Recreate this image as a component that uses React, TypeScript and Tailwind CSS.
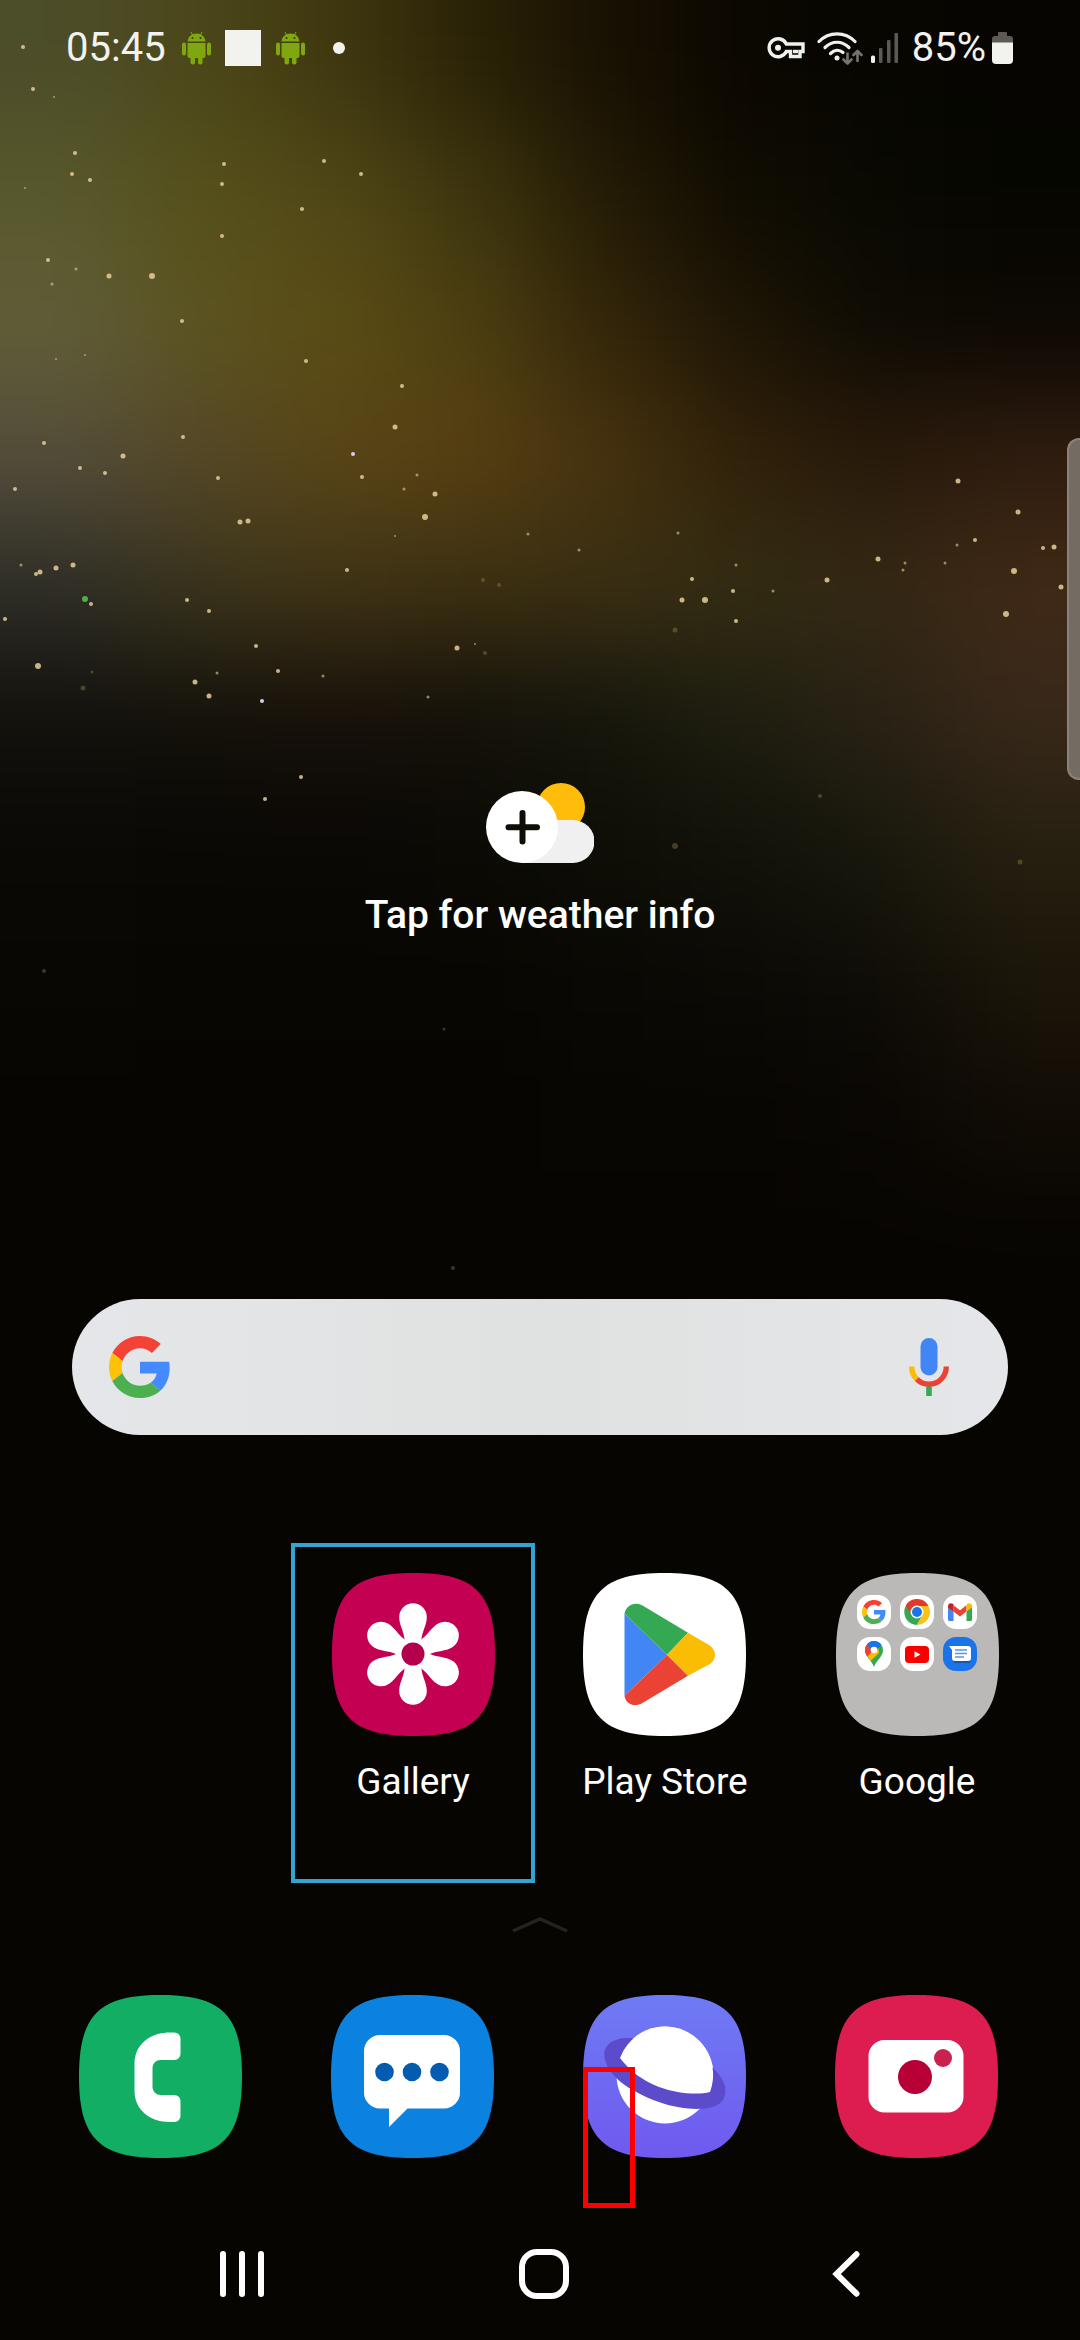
import type { ReactNode } from "react";

/* Colour field of the wallpaper: one row for every 130 units of height. */
const FIELD = [
  ["#4c4d29", "#4b4719", "#3f370f", "#2a2206", "#181002", "#0b0701", "#070601", "#060501"],
  ["#58582c", "#56501a", "#504717", "#3d350e", "#231b05", "#100c02", "#090902", "#060601"],
  ["#605d38", "#5b5320", "#5a4c15", "#4c3f11", "#332509", "#1d1505", "#0e0b04", "#0d0803"],
  ["#544d3a", "#554726", "#594516", "#573f12", "#46320f", "#302009", "#28190a", "#2e1c0f"],
  ["#2f2e27", "#3a341c", "#403416", "#3c3012", "#3a2f13", "#332d13", "#342814", "#402916"],
  ["#12110c", "#14110a", "#17100a", "#14110a", "#16160c", "#1f1e10", "#292215", "#38281a"],
  ["#0a0906", "#0a0805", "#0a0805", "#0b0a04", "#0e0e06", "#12120a", "#19180d", "#262010"],
  ["#080704", "#080603", "#080603", "#080603", "#090804", "#0b0a05", "#0f0d07", "#1c160a"],
  ["#070502", "#070502", "#070502", "#070502", "#070603", "#080603", "#0a0704", "#120c05"],
];

/* Stars as x, y, radius. */
const STARS: [number, number, number][] = [
  [23, 47, 2], [33, 89, 2], [54, 97, 1], [75, 153, 2], [72, 174, 2], [90, 180, 2], [25, 188, 1],
  [224, 164, 2], [222, 184, 2], [222, 236, 2], [324, 161, 2], [361, 174, 2], [302, 209, 2],
  [48, 260, 2], [76, 269, 1.5], [109, 276, 2.5], [152, 276, 3], [52, 284, 1.5], [182, 321, 2],
  [56, 359, 1], [85, 355, 1], [306, 361, 2], [402, 386, 2], [395, 427, 2.5], [44, 443, 2],
  [183, 437, 2], [123, 456, 2.5], [105, 473, 2], [80, 468, 2], [15, 489, 2], [218, 478, 2],
  [362, 477, 2], [404, 489, 1.5], [417, 475, 1.5], [435, 494, 2.5], [425, 517, 3],
  [240, 522, 2.5], [248, 521, 2.5], [395, 536, 1], [528, 534, 1.5], [579, 550, 1.5], [347, 570, 2],
  [21, 565, 1.5], [36, 574, 2], [40, 572, 2.5], [56, 568, 2.5], [73, 565, 2.5], [91, 604, 2],
  [5, 619, 2], [187, 600, 2], [209, 611, 2], [256, 646, 2], [38, 666, 3], [195, 682, 2.5],
  [209, 696, 2.5], [217, 673, 1.5], [278, 671, 2], [323, 676, 1.5], [457, 648, 2.5],
  [475, 644, 1], [428, 697, 1.5], [301, 777, 2], [265, 799, 2],
  [678, 533, 1.5], [692, 579, 2], [682, 600, 2.5], [705, 600, 3], [736, 565, 1.5], [733, 591, 2],
  [773, 591, 1.5], [736, 621, 2], [827, 580, 2.5], [878, 559, 2.5], [905, 563, 1.5],
  [903, 570, 1.5], [945, 563, 1.5], [957, 545, 1.5], [975, 540, 2], [958, 481, 2.5],
  [1018, 512, 2.5], [1043, 548, 2], [1054, 547, 2.5], [1014, 571, 3], [1006, 614, 3],
  [1061, 587, 2.5], [1070, 540, 2],
];

const FAINT_STARS: [number, number, number][] = [
  [483, 580, 2], [499, 585, 2], [485, 653, 2], [83, 688, 2.5], [92, 672, 1.5], [675, 630, 2.5],
  [675, 846, 3], [820, 796, 2], [1020, 862, 2.5], [44, 971, 2], [444, 1029, 1.5], [453, 1268, 2],
];

function Wallpaper() {
  return (
    <svg
      className="absolute inset-0 h-full w-full"
      viewBox="0 0 1080 2340"
      preserveAspectRatio="xMidYMin slice"
      aria-hidden="true"
    >
      <defs>
        <filter
          id="soften"
          filterUnits="userSpaceOnUse"
          x="-200"
          y="-200"
          width="1480"
          height="2740"
          colorInterpolationFilters="sRGB"
        >
          <feGaussianBlur stdDeviation="52" />
        </filter>
      </defs>
      <rect width="1080" height="2340" fill="#070502" />
      <g filter="url(#soften)">
        <rect x="-200" y="1100" width="1480" height="1500" fill="#070502" />
        {FIELD.map((row, r) =>
          row.map((fill, c) => {
            const x = c === 0 ? -200 : c * 135;
            const right = c === 7 ? 1280 : (c + 1) * 135 + 1;
            const y = r === 0 ? -200 : r * 130;
            const bottom = (r + 1) * 130 + 1;
            return <rect key={`${r}-${c}`} x={x} y={y} width={right - x} height={bottom - y} fill={fill} />;
          }),
        )}
      </g>
      <g fill="#e6cf9a">
        {STARS.map(([x, y, r]) => (
          <circle key={`${x}-${y}`} cx={x} cy={y} r={r} opacity={r < 2 ? 0.6 : 0.85} />
        ))}
      </g>
      <g fill="#a8935a" opacity="0.35">
        {FAINT_STARS.map(([x, y, r]) => (
          <circle key={`${x}-${y}`} cx={x} cy={y} r={r} />
        ))}
      </g>
      <circle cx="85" cy="599" r="3" fill="#4fae4a" />
      <circle cx="353" cy="454" r="2" fill="#d9ccec" />
      <circle cx="262" cy="701" r="2" fill="#d9ccec" />
    </svg>
  );
}

function AndroidIcon() {
  return (
    <svg className="h-[34px] w-[29px]" viewBox="0 0 29 34" fill="#7fa70f" aria-hidden="true">
      <path d="M9 1l2 4M20 1l-2 4" stroke="#7fa70f" strokeWidth="1" />
      <path d="M5.500 10.500C6 5.500 9.500 2.500 14.500 2.500S23 5.500 23.500 10.500z" />
      <rect y="11.500" width="4" height="13" rx="2" />
      <rect x="25" y="11.500" width="4" height="13" rx="2" />
      <path d="M5.500 12h18v13a2 2 0 0 1-2 2h-14a2 2 0 0 1-2-2z" />
      <rect x="8.500" y="22" width="4.500" height="11.500" rx="2" />
      <rect x="16" y="22" width="4.500" height="11.500" rx="2" />
      <circle cx="10.500" cy="7" r="1" fill="#333a0c" />
      <circle cx="18.500" cy="7" r="1" fill="#333a0c" />
    </svg>
  );
}

function StatusBar() {
  return (
    <header className="flex h-24 items-center pl-[66px] pr-[67px] text-[40px] leading-none text-[#f2f2ee]">
      <time className="w-[116px]">05:45</time>
      <AndroidIcon />
      <span className="ml-3.5 size-9 bg-[#f2f2ee]" />
      <span className="ml-[15px] flex">
        <AndroidIcon />
      </span>
      <span className="ml-7 size-3 rounded-full bg-[#f2f2ee]" />
      <div className="ml-auto flex items-center">
        <svg className="h-[22px] w-[38px]" viewBox="0 0 38 22" fill="none" stroke="#f0f0ee" aria-hidden="true">
          <path
            d="M19.300 7H36v7.500h-3V19.500H23.500V14.500H19.300A9 9 0 1 1 19.300 7z"
            strokeWidth="3.400"
          />
          <path d="M26 14.500h5" strokeWidth="3.400" />
          <circle cx="11" cy="10.800" r="3" fill="#f0f0ee" stroke="none" />
        </svg>
        <svg className="ml-3 h-[34px] w-[46px]" viewBox="0 0 46 34" fill="none" aria-hidden="true">
          <g stroke="#f0f0ee" strokeWidth="3.200" strokeLinecap="round">
            <path d="M2 10.500C12 .200 28 .200 38 10.500" />
            <path d="M8 16.500C15 9.500 25 9.500 32 16.500" />
            <path d="M13.500 22.500C17.500 18.500 22.500 18.500 26 21.500" />
          </g>
          <circle cx="20" cy="27" r="2.500" fill="#f0f0ee" />
          <g stroke="#77736b" strokeWidth="2.600" strokeLinecap="round" strokeLinejoin="round">
            <path d="M30.500 22.500v10M26.500 28.500l4 4 4-4" />
            <path d="M40.500 30V20M36.500 24l4-4 4 4" />
          </g>
        </svg>
        <svg className="ml-2 h-[30px] w-7" viewBox="0 0 28 30" fill="#5d5a54" aria-hidden="true">
          <rect y="22.500" width="4" height="7.500" rx="1.500" fill="#f0f0ee" />
          <rect x="8" y="15" width="3.500" height="15" rx="1" />
          <rect x="16" y="7" width="3.500" height="23" rx="1" />
          <rect x="23.500" width="3.500" height="30" rx="1" />
        </svg>
        <span className="ml-[13px]">85%</span>
        <svg className="ml-1.5 h-8 w-[21px]" viewBox="0 0 21 32" aria-hidden="true">
          <path d="M7 0h7a1 1 0 0 1 1 1v3h3a3 3 0 0 1 3 3v4H0V7a3 3 0 0 1 3-3h3V1a1 1 0 0 1 1-1z" fill="#5d5a54" />
          <path d="M0 10.500h21V28a4 4 0 0 1-4 4H4a4 4 0 0 1-4-4z" fill="#f2f2ee" />
        </svg>
      </div>
    </header>
  );
}

function WeatherIcon() {
  return (
    <svg className="h-20 w-[108px]" viewBox="0 0 108 80" aria-hidden="true">
      <circle cx="75" cy="24" r="24" fill="#ffbc0a" />
      <path d="M36 37h51a21.500 21.500 0 0 1 0 43H36z" fill="#f0f0f0" />
      <circle cx="36" cy="44" r="36" fill="#fff" />
      <path d="M36.500 30v28.500M22.500 44.300H51" stroke="#0e0d07" strokeWidth="6" strokeLinecap="round" />
    </svg>
  );
}

function GoogleG({ className }: { className: string }) {
  return (
    <svg className={className} viewBox="0 0 48 48" aria-hidden="true">
      <path fill="#f44336" d="M24 9.500c3.540 0 6.710 1.220 9.210 3.600l6.850-6.850C35.900 2.380 30.470 0 24 0 14.620 0 6.510 5.380 2.560 13.220l7.980 6.190C12.430 13.720 17.740 9.500 24 9.500z" />
      <path fill="#448aff" d="M46.980 24.550c0-1.570-.15-3.090-.38-4.550H24v9.020h12.940c-.58 2.960-2.260 5.480-4.780 7.180l7.730 6c4.510-4.180 7.090-10.360 7.090-17.650z" />
      <path fill="#ffc107" d="M10.530 28.590c-.48-1.450-.76-2.990-.76-4.590s.27-3.140.76-4.590l-7.980-6.190C.92 16.460 0 20.120 0 24c0 3.880.92 7.540 2.560 10.780l7.970-6.190z" />
      <path fill="#4caf50" d="M24 48c6.480 0 11.930-2.130 15.890-5.810l-7.730-6c-2.150 1.450-4.920 2.300-8.160 2.300-6.260 0-11.570-4.220-13.470-9.910l-7.980 6.190C6.510 42.620 14.620 48 24 48z" />
    </svg>
  );
}

function MicIcon() {
  return (
    <svg className="h-[58px] w-10" viewBox="0 0 40 58" fill="none" aria-hidden="true">
      <rect x="11.500" width="17" height="37.500" rx="8.500" fill="#4285f4" />
      <path d="M2.700 28.500C2.700 33.500 4.500 38 7.800 41.200" stroke="#fbbc05" strokeWidth="5.400" />
      <path d="M7.800 41.200C11 44.500 15.300 46.300 20 46.300 29.500 46.300 37.300 38.500 37.300 28.500" stroke="#ea4335" strokeWidth="5.400" />
      <rect x="17.200" y="48.500" width="5.600" height="9.500" fill="#34a853" />
    </svg>
  );
}

function SearchBar() {
  return (
    <form className="mx-[72px] mt-[360px] flex h-[136px] items-center rounded-full bg-linear-to-r from-[#e4e6e9] via-[#e0e2e1] to-[#e4e6e9] pl-[37px] pr-[59px]">
      <button type="button" aria-label="Google" className="shrink-0">
        <GoogleG className="size-[62px]" />
      </button>
      <input type="search" aria-label="Search" className="h-full min-w-0 flex-1 bg-transparent px-6 text-4xl text-[#202124] outline-none" />
      <button type="button" aria-label="Voice search" className="shrink-0">
        <MicIcon />
      </button>
    </form>
  );
}

function Squircle({ fill, children }: { fill: string; children?: ReactNode }) {
  return (
    <svg className="block size-[163px]" viewBox="0 0 163 163" aria-hidden="true">
      <defs>
        <linearGradient id="violet" x1="0" y1="0" x2="0" y2="1">
          <stop offset="0" stopColor="#6e7bf4" />
          <stop offset="1" stopColor="#7059ef" />
        </linearGradient>
      </defs>
      <path
        d="M0 81.500C0 20 20 0 81.500 0S163 20 163 81.500 143 163 81.500 163 0 143 0 81.500z"
        fill={fill}
      />
      {children}
    </svg>
  );
}

function GalleryIcon() {
  return (
    <Squircle fill="#c40053">
      <g transform="translate(81 81)" fill="#fff">
        {[0, 60, 120, 180, 240, 300].map((angle) => (
          <path
            key={angle}
            transform={`rotate(${angle})`}
            d="M-13.800-37A13.800 13.800 0 0 1 13.800-37C13.800-29 9.500-24 8.300-14L0 0-8.300-14C-9.500-24-13.800-29-13.800-37z"
          />
        ))}
        <circle r="15" />
        <circle r="11.500" fill="#b4004c" />
      </g>
    </Squircle>
  );
}

function PlayStoreIcon() {
  return (
    <Squircle fill="#fff">
      <path d="M41.500 40.500L84 81.700 41.500 123z" fill="#4285f4" />
      <path d="M41.500 40.500C43 32 52 28 59.500 32.500L105 59.800 84 81.700z" fill="#34a853" />
      <path d="M41.500 123C43 131.500 52 134.500 59.500 130L105 102.800 84 81.700z" fill="#ea4335" />
      <path d="M105 59.800L126 72C134 77 134 87 126 91.500L105 102.800 84 81.700z" fill="#fbbc04" />
    </Squircle>
  );
}

function MiniTile({ className, children }: { className: string; children: ReactNode }) {
  return (
    <span className={`flex size-[34px] items-center justify-center rounded-[13px] ${className}`}>{children}</span>
  );
}

function FolderIcon() {
  return (
    <span className="relative block">
      <Squircle fill="#bab9b8" />
      <span className="absolute left-[21px] top-[22px] grid grid-cols-3 gap-x-[9px] gap-y-2">
        <MiniTile className="bg-white">
          <GoogleG className="size-6" />
        </MiniTile>
        <MiniTile className="bg-white">
          <svg className="size-[26px]" viewBox="0 0 26 26" aria-hidden="true">
            <path d="M13 13L2 6.500A13 13 0 0 0 13 26L18.500 16z" fill="#34a853" />
            <path d="M13 13L13 7H24.500A13 13 0 0 1 13 26L18.500 16z" fill="#fbc116" />
            <path d="M1.700 6.500A13 13 0 0 1 24.500 7H13L7.500 16z" fill="#dd3b2b" />
            <circle cx="13" cy="13" r="6.500" fill="#fff" />
            <circle cx="13" cy="13" r="5" fill="#1a73e8" />
          </svg>
        </MiniTile>
        <MiniTile className="bg-white">
          <svg className="h-[18px] w-6" viewBox="0 0 24 18" aria-hidden="true">
            <path d="M0 4v12.500A1.500 1.500 0 0 0 1.500 18H5.500V8z" fill="#4285f4" />
            <path d="M24 4v12.500a1.500 1.500 0 0 1-1.500 1.500H18.500V8z" fill="#34a853" />
            <path d="M5.500 2.200L12 7.200 18.500 2.200V8.500L12 13.500 5.500 8.500z" fill="#ea4335" />
            <path d="M0 3C0 .200 3 -.800 5.500 1.200V8.500L0 4.500z" fill="#c5221f" />
            <path d="M24 3c0-2.800-3-3.800-5.500-1.800V8.500L24 4.500z" fill="#fbbc04" />
          </svg>
        </MiniTile>
        <MiniTile className="bg-white">
          <svg className="h-[26px] w-[18px]" viewBox="0 0 18 26" aria-hidden="true">
            <path d="M9 0a9 9 0 0 1 9 9C18 16 12 18 9 26 6 18 0 16 0 9A9 9 0 0 1 9 0z" fill="#34a853" />
            <path d="M0 9A9 9 0 0 1 2 3.200L9 9 2.500 15.500C1 13.500 0 11.500 0 9z" fill="#ea4335" />
            <path d="M2.500 15.500L13 4.500 14 12 5.500 20C4.500 18 3.500 17 2.500 15.500z" fill="#fbbc04" />
            <path d="M2 3.200A9 9 0 0 1 16.500 4L9 11.500z" fill="#1a73e8" />
            <circle cx="9" cy="9" r="3.300" fill="#fff" />
          </svg>
        </MiniTile>
        <MiniTile className="bg-white">
          <svg className="h-[17px] w-6" viewBox="0 0 24 17" aria-hidden="true">
            <rect width="24" height="17" rx="4" fill="#fc0000" />
            <path d="M9.500 5.200v6.600l6-3.300z" fill="#fff" />
          </svg>
        </MiniTile>
        <MiniTile className="bg-[#1a73e8]">
          <svg className="h-[18px] w-[22px]" viewBox="0 0 22 18" aria-hidden="true">
            <path d="M4 16h17v2H6z" fill="#1556b0" />
            <path d="M0 1h19a3 3 0 0 1 3 3v9a3 3 0 0 1-3 3H6a3 3 0 0 1-3-3V5z" fill="#fff" />
            <path d="M6 5h12M6 8.500h12M6 12h9" stroke="#5a93ec" strokeWidth="1.400" />
          </svg>
        </MiniTile>
      </span>
    </span>
  );
}

function PhoneIcon() {
  return (
    <Squircle fill="#11ae63">
      <path
        d="M95.500 37.500A6 6 0 0 1 101.500 43.500V59A6 6 0 0 1 95.500 65H81.500A8 8 0 0 0 73.500 73V92A8 8 0 0 0 81.500 100H95.500A6 6 0 0 1 101.500 106V121A6 6 0 0 1 95.500 127H91C70 127 55.500 114 55.500 96V68.500C55.500 50.500 70 37.500 91 37.500z"
        fill="#fff"
      />
    </Squircle>
  );
}

function MessagesIcon() {
  return (
    <Squircle fill="#0c82e0">
      <path
        d="M49 40H113A16 16 0 0 1 129 56V97.500A16 16 0 0 1 113 113.500H76.500L58 132V113.500H49A16 16 0 0 1 33 97.500V56A16 16 0 0 1 49 40z"
        fill="#fff"
      />
      <g fill="#035cb0">
        <circle cx="53.500" cy="77" r="9.300" />
        <circle cx="81" cy="77" r="9.300" />
        <circle cx="108.500" cy="77" r="9.300" />
      </g>
    </Squircle>
  );
}

function InternetIcon() {
  return (
    <Squircle fill="url(#violet)">
      <circle cx="82" cy="80" r="48.500" fill="#fff" />
      <path
        d="M48 43C30 42 20 50 21.500 62 24 80 45 96 76 107 95 114 114 115 125 113 138 111 144 103 142 92 141 86 137 80 130 73z"
        fill="#5c4ccc"
      />
      <path d="M37 63A48.500 48.500 0 0 1 82 31.500 48.500 48.500 0 0 1 127 97C115 100 95 99 76 92 60 86 47 76 37 63z" fill="#fff" />
    </Squircle>
  );
}

function CameraIcon() {
  return (
    <Squircle fill="#dd1d50">
      <rect x="33.500" y="45" width="95" height="72.500" rx="16" fill="#fff" />
      <circle cx="80" cy="82" r="17" fill="#b60036" />
      <circle cx="108" cy="63" r="9" fill="#c92150" />
    </Squircle>
  );
}

function AppLabel({ children }: { children: ReactNode }) {
  return <span className="mt-6 text-[37px] leading-[44px] text-white">{children}</span>;
}

function Dock() {
  return (
    <nav aria-label="Favourite apps" className="mt-[62px] grid grid-cols-4 justify-items-center pl-[34px] pr-[38px]">
      <button type="button" aria-label="Phone">
        <PhoneIcon />
      </button>
      <button type="button" aria-label="Messages">
        <MessagesIcon />
      </button>
      <button type="button" aria-label="Internet" className="relative">
        <InternetIcon />
        <span className="absolute left-0 top-[72px] h-[141px] w-[52px] border-5 border-[#fb0000]" />
      </button>
      <button type="button" aria-label="Camera">
        <CameraIcon />
      </button>
    </nav>
  );
}

function NavigationBar() {
  return (
    <nav aria-label="System" className="mt-[91px] flex h-[50px] items-center justify-center gap-[252px] pl-2">
      <button type="button" aria-label="Recent apps" className="flex h-[46px] w-[50px] justify-center gap-[13px]">
        <span className="h-full w-1.5 rounded-full bg-white" />
        <span className="h-full w-1.5 rounded-full bg-white" />
        <span className="h-full w-1.5 rounded-full bg-white" />
      </button>
      <button type="button" aria-label="Home" className="size-[50px] rounded-[18px] border-6 border-white" />
      <button type="button" aria-label="Back" className="flex w-[50px] justify-center">
        <svg className="h-[46px] w-7" viewBox="0 0 28 46" fill="none" aria-hidden="true">
          <path d="M24.500 3.300L4.500 23l20 19.700" stroke="#fff" strokeWidth="6" strokeLinecap="round" />
        </svg>
      </button>
    </nav>
  );
}

export default function App() {
  return (
    <div className="relative min-h-screen overflow-hidden bg-[#070502] font-[Roboto,sans-serif]">
      <Wallpaper />
      <div className="relative flex min-h-screen flex-col">
        <StatusBar />
        <main>
          <button type="button" className="mx-auto mt-[687px] flex flex-col items-center">
            <WeatherIcon />
            <span className="mt-7 text-[39px] font-medium leading-12 text-white">Tap for weather info</span>
          </button>
          <SearchBar />
          <section aria-label="Apps" className="mt-[108px] grid grid-cols-4 justify-items-center pl-[35px] pr-[37px]">
            <button type="button" className="col-start-2 flex h-[340px] w-[244px] flex-col items-center border-4 border-[#35a3cf] pt-[26px]">
              <GalleryIcon />
              <AppLabel>Gallery</AppLabel>
            </button>
            <button type="button" className="flex flex-col items-center self-start pt-[30px]">
              <PlayStoreIcon />
              <AppLabel>Play Store</AppLabel>
            </button>
            <button type="button" className="flex flex-col items-center self-start pt-[30px]">
              <FolderIcon />
              <AppLabel>Google</AppLabel>
            </button>
          </section>
          <svg className="mx-auto mt-[34px] block h-4 w-[58px]" viewBox="0 0 58 16" fill="none" aria-hidden="true">
            <path d="M2 14L29 2l27 12" stroke="#24231f" strokeWidth="3.500" />
          </svg>
        </main>
        <Dock />
        <NavigationBar />
      </div>
      <button
        type="button"
        aria-label="Edge panel"
        className="absolute right-0 top-[438px] h-[342px] w-[13px] rounded-l-xl border-2 border-r-0 border-[#8b8379] bg-[#746b62]"
      />
    </div>
  );
}
